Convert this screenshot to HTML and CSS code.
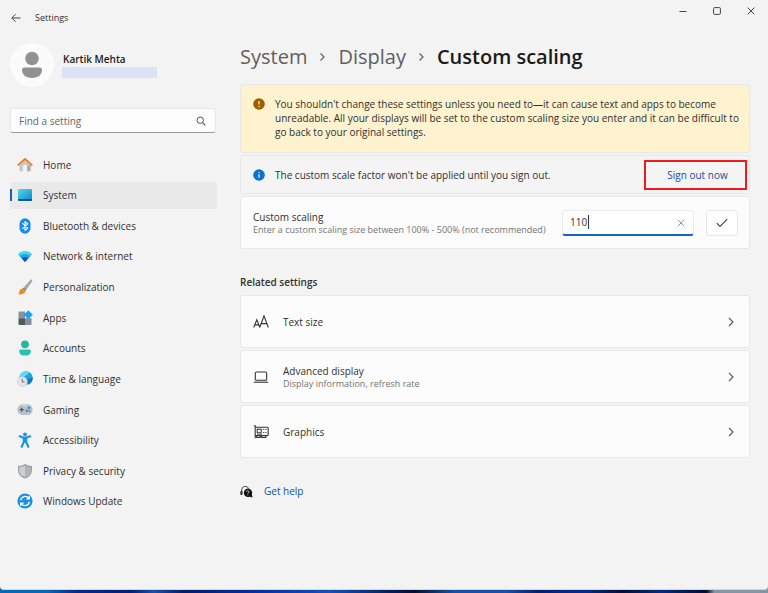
FILE: index.html
```html
<!DOCTYPE html>
<html lang="en">
<head>
<meta charset="utf-8">
<meta name="viewport" content="width=device-width, initial-scale=1">
<title>Settings</title>
<link rel="stylesheet" href="styles.css">
</head>
<body>
<div class="window">
  <header class="titlebar">
    <button class="icon-button back" type="button" aria-label="Back"><svg width="10" height="10" viewBox="0 0 10 10"><path d="M9.500 5H.8M4.600 1.200.8 5l3.800 3.800" fill="none" stroke="#444"/></svg></button>
    <span class="app-name">Settings</span>
    <div class="window-controls">
      <button class="icon-button" type="button" aria-label="Minimize"><svg width="8" height="8" viewBox="0 0 8 8"><path d="M.5 4.500h7" stroke="#444"/></svg></button>
      <button class="icon-button" type="button" aria-label="Maximize"><svg width="8" height="8" viewBox="0 0 8 8"><rect x=".6" y=".6" width="6.800" height="6.800" rx="1" fill="none" stroke="#444"/></svg></button>
      <button class="icon-button" type="button" aria-label="Close"><svg width="8" height="8" viewBox="0 0 8 8"><path d="m.6.6 6.800 6.800m0-6.800L.6 7.400" fill="none" stroke="#444"/></svg></button>
    </div>
  </header>

  <div class="layout">
    <aside class="sidebar">
      <div class="account">
        <svg class="avatar" width="44" height="44" viewBox="0 0 44 44" aria-hidden="true"><circle cx="22" cy="22" r="22" fill="#fbfbfb"/><circle cx="22" cy="15.500" r="6.800" fill="#919191"/><path d="M14.500 24.500h15c1.700 0 2.500 1 2.500 2.500 0 5-4.500 8-10 8s-10-3-10-8c0-1.500.8-2.500 2.500-2.500z" fill="#919191"/></svg>
        <div class="account-text">
          <strong>Kartik Mehta</strong>
          <div class="account-mail"></div>
        </div>
      </div>

      <label class="search">
        <input type="search" placeholder="Find a setting" aria-label="Find a setting">
        <svg width="10" height="10" viewBox="0 0 10 10" aria-hidden="true"><circle cx="4.200" cy="4.200" r="3.200" fill="none" stroke="#555"/><path d="m6.600 6.600 2.700 2.700" stroke="#555" stroke-width="1.200"/></svg>
      </label>

      <nav class="nav">
        <a href="#home"><svg viewBox="0 0 16 16"><path d="M2.500 7 8 2.200 13.500 7v6.500a.8.8 0 0 1-.8.8H10V9.800a2 2 0 0 0-4 0v4.500H3.300a.8.8 0 0 1-.8-.8z" fill="#c9c9c9"/><path d="M10 9.800v4.500h2.700a.8.8 0 0 0 .8-.8V7z" fill="#adadad"/><path d="M1.300 7.900 8 1.900l6.700 6" fill="none" stroke="#ee7a1a" stroke-width="1.800" stroke-linecap="round" stroke-linejoin="round"/></svg>Home</a>
        <a href="#system" class="current" aria-current="page"><svg viewBox="0 0 16 16"><defs><linearGradient id="screen" x2="1" y2="1"><stop stop-color="#4fdbe9"/><stop offset="1" stop-color="#1480cf"/></linearGradient></defs><rect x="1" y="2" width="14" height="12" rx="1.200" fill="url(#screen)"/><path d="M1 12h14v.8a1.200 1.200 0 0 1-1.200 1.200H2.200A1.200 1.200 0 0 1 1 12.800z" fill="#0b5c94"/></svg>System</a>
        <a href="#bluetooth"><svg viewBox="0 0 16 16"><rect x="2.500" y=".3" width="11" height="15.400" rx="5.500" fill="#168cf2"/><path d="m5.300 5.200 5.400 5L8 12.400V3.600l2.700 2.200-5.400 5" fill="none" stroke="#fff" stroke-width="1.100" stroke-linejoin="round"/></svg>Bluetooth &amp; devices</a>
        <a href="#network"><svg viewBox="0 0 16 16"><path d="M.8 6.200C4.800 1.900 11.200 1.900 15.200 6.200L8 14z" fill="#47d4ed"/><path d="M2.700 8.200c3-3 7.600-3 10.600 0L8 14z" fill="#23a3e2"/><path d="M4.700 10.300c2-1.700 4.600-1.700 6.600 0L8 14z" fill="#1559b0"/></svg>Network &amp; internet</a>
        <a href="#personalization"><svg viewBox="0 0 16 16"><path d="M14.900.8c.7.6.2 1.600-.2 2.300L9.300 10.700 6.700 8.600 12.700 1.800c.6-.7 1.500-1.600 2.200-1z" fill="#9ba8b2"/><path d="m9.300 10.700-2.600-2.100-1 1.100 2.500 2z" fill="#65727c"/><path d="M5.500 9.600c1.800 0 3.100 1.300 2.800 3-.4 2.200-3.300 3.200-7.500 2.700 1.500-.8 1.300-1.800 1.700-3.300.4-1.400 1.500-2.400 3-2.400z" fill="#f08b24"/></svg>Personalization</a>
        <a href="#apps"><svg viewBox="0 0 16 16"><path d="M2.600 1.500H8v6.700H1.500V2.600c0-.6.500-1.100 1.100-1.100z" fill="#88929b"/><path d="M1.500 8.200H8v6.900H2.600A1.100 1.100 0 0 1 1.500 14z" fill="#505860"/><path d="M8 8.200h6.500V14c0 .6-.5 1.100-1.100 1.100H8z" fill="#858e96"/><path d="m11.300.8 4 4-4 4-4-4z" fill="#20a1ef" stroke="#20a1ef" stroke-linejoin="round"/></svg>Apps</a>
        <a href="#accounts"><svg viewBox="0 0 16 16"><circle cx="8" cy="4.300" r="3.900" fill="#21b9a6"/><path d="M4.200 9.500h7.600c1.600 0 2.300.9 2.100 2.200-.4 2.500-2.700 3.900-5.900 3.900s-5.500-1.400-5.900-3.900c-.2-1.300.5-2.200 2.100-2.200z" fill="#2bc2ad"/></svg>Accounts</a>
        <a href="#time"><svg viewBox="0 0 16 16"><circle cx="9" cy="7" r="6.700" fill="#1fa5dc"/><path d="M4 2.700C6.600.2 10-.2 12 1.500 11 4 8 3.800 7 6.500L3 8C2 6 2.500 4 4 2.700z" fill="#5fdaf0"/><path d="M10.500 8.500c2-1.500 3.200-.5 5-2.500.8 3.500-1.500 6.500-4.500 7.500z" fill="#1277bd"/><circle cx="5.300" cy="10.700" r="4.900" fill="#e3e5e7" stroke="#bec4c8" stroke-width=".5"/><path d="M5.200 7.800v3.100h2.300" fill="none" stroke="#55606a" stroke-width=".9"/></svg>Time &amp; language</a>
        <a href="#gaming"><svg viewBox="0 0 16 16"><rect x=".4" y="2.300" width="15.200" height="10.800" rx="5.300" fill="#b9c0c7"/><path d="M4.700 5.700v4m-2-2h4" stroke="#4c5760" stroke-width="1.300"/><circle cx="12" cy="5.700" r="1.200" fill="#238bdf"/><circle cx="9.900" cy="8.800" r="1.200" fill="#238bdf"/><circle cx="12.600" cy="9" r=".8" fill="#4e5963"/><path d="M6 3.700h3" stroke="#e5e8eb"/></svg>Gaming</a>
        <a href="#accessibility"><svg viewBox="0 0 16 16"><circle cx="8" cy="2.300" r="1.900" fill="#1695e5"/><path d="m2.700 4.300 3.500 1.300h3.600l3.500-1.300M8 5.500v4M6.800 6v4l-2.100 4.700M9.200 6v4l2.100 4.700" fill="none" stroke="#1695e5" stroke-width="2.100" stroke-linecap="round" stroke-linejoin="round"/></svg>Accessibility</a>
        <a href="#privacy"><svg viewBox="0 0 16 16"><path d="M8 .8c2 1.500 4.400 2.200 7 2.300v4.300c0 3.700-2.800 6.500-7 8-4.200-1.500-7-4.300-7-8V3.100C3.600 3 6 2.300 8 .8z" fill="#9ca2a8"/><path d="M8 2.200c1.800 1.200 3.700 1.800 5.800 2v3.200C13.800 10.500 11.600 12.800 8 14z" fill="#b0b5ba"/><path d="M8 2.200c-1.800 1.200-3.700 1.800-5.800 2v3.200C2.200 10.500 4.400 12.800 8 14z" fill="#cacdd1"/></svg>Privacy &amp; security</a>
        <a href="#update"><svg viewBox="0 0 16 16"><circle cx="8" cy="8" r="7.600" fill="#1b91e1"/><path d="M3.700 7.200a4.500 4.500 0 0 1 8.200-1.700m.4 3.300a4.500 4.500 0 0 1-8.200 1.700M12.300 2.900v2.900H9.400M3.700 13.100v-2.900h2.900" fill="none" stroke="#fff" stroke-width="1.300"/></svg>Windows Update</a>
      </nav>
    </aside>

    <main class="content">
      <div class="breadcrumb">
        <a href="#system">System</a>
        <svg width="7" height="10" viewBox="0 0 7 10" aria-hidden="true"><path d="m1.500 1.500 3.500 3.500-3.500 3.500" fill="none" stroke="#666" stroke-width="1.300"/></svg>
        <a href="#display">Display</a>
        <svg width="7" height="10" viewBox="0 0 7 10" aria-hidden="true"><path d="m1.500 1.500 3.500 3.500-3.500 3.500" fill="none" stroke="#666" stroke-width="1.300"/></svg>
        <h1>Custom scaling</h1>
      </div>

      <div class="stack">
        <section class="card warning">
          <svg width="12" height="12" viewBox="0 0 12 12" aria-hidden="true"><circle cx="6" cy="6" r="5.800" fill="#9d5d00"/><path d="M6 3v3.500" stroke="#fff4ce" stroke-width="1.200"/><circle cx="6" cy="8.500" r=".7" fill="#fff4ce"/></svg>
          <p>You shouldn't change these settings unless you need to—it can cause text and apps to become unreadable. All your displays will be set to the custom scaling size you enter and it can be difficult to go back to your original settings.</p>
        </section>
        <section class="card info">
          <svg width="12" height="12" viewBox="0 0 12 12" aria-hidden="true"><circle cx="6" cy="6" r="5.800" fill="#0874d1"/><path d="M6 5.300v3.500" stroke="#fff" stroke-width="1.200"/><circle cx="6" cy="3.600" r=".7" fill="#fff"/></svg>
          <p>The custom scale factor won't be applied until you sign out.</p>
          <button class="sign-out" type="button">Sign out now</button>
        </section>
        <section class="card scaling">
          <div class="card-text">
            <label for="scale">Custom scaling</label>
            <small>Enter a custom scaling size between 100% - 500% (not recommended)</small>
          </div>
          <div class="field">
            <input id="scale" type="text" inputmode="numeric" value="110">
            <button class="icon-button clear" type="button" aria-label="Clear"><svg width="8" height="8" viewBox="0 0 8 8"><path d="m.8.8 6.400 6.400m0-6.400L.8 7.200" fill="none" stroke="#888" stroke-width=".9"/></svg></button>
          </div>
          <button class="apply" type="button" aria-label="Apply"><svg width="12" height="10" viewBox="0 0 12 10"><path d="m.8 5.200 3.200 3.200L11.200 1.200" fill="none" stroke="#444" stroke-width="1.100"/></svg></button>
        </section>
      </div>

      <h2>Related settings</h2>
      <div class="stack">
        <a class="card link-card" href="#text-size">
          <svg width="16" height="16" viewBox="0 0 16 16" aria-hidden="true"><path d="m.7 13.500 3.100-7.800 3.100 7.800M1.800 10.900h4M6.700 13.500 11 1.800l4.300 11.700M8.100 9.600h5.800" fill="none" stroke="#333" stroke-width="1.100"/></svg>
          <span class="card-text"><span>Text size</span></span>
          <svg class="chevron" width="6" height="10" viewBox="0 0 6 10" aria-hidden="true"><path d="m1 1 4 4-4 4" fill="none" stroke="#555" stroke-width="1.100"/></svg>
        </a>
        <a class="card link-card" href="#advanced-display">
          <svg width="16" height="16" viewBox="0 0 16 16" aria-hidden="true"><rect x="2.300" y="3" width="11.400" height="8.200" rx="1.300" fill="none" stroke="#333" stroke-width="1.100"/><path d="M.8 13.200h14.400" stroke="#333" stroke-width="1.100"/></svg>
          <span class="card-text"><span>Advanced display</span><small>Display information, refresh rate</small></span>
          <svg class="chevron" width="6" height="10" viewBox="0 0 6 10" aria-hidden="true"><path d="m1 1 4 4-4 4" fill="none" stroke="#555" stroke-width="1.100"/></svg>
        </a>
        <a class="card link-card" href="#graphics">
          <svg width="16" height="16" viewBox="0 0 16 16" aria-hidden="true"><path d="M.8 1.700h1.400v12.600M2.200 3.200h12c.6 0 1 .4 1 1v6.400c0 .6-.4 1-1 1h-12M3.700 11.600v1.900h3.600v-1.900m1.400 0v1.900h4.100v-1.900" fill="none" stroke="#333" stroke-width="1.100"/><rect x="4.200" y="5.200" width="4" height="3.600" fill="none" stroke="#333"/><path d="M10 5.500h1.300m1 0h1.300M10 8.500h1.300m1 0h1.300M4 10.200h5" stroke="#555"/></svg>
          <span class="card-text"><span>Graphics</span></span>
          <svg class="chevron" width="6" height="10" viewBox="0 0 6 10" aria-hidden="true"><path d="m1 1 4 4-4 4" fill="none" stroke="#555" stroke-width="1.100"/></svg>
        </a>
      </div>

      <a class="help" href="#help">
        <svg width="13" height="13" viewBox="0 0 13 13" aria-hidden="true"><path d="M1.700 9.300V4.800a3.600 3.600 0 0 1 6.900-1.300" fill="none" stroke="#444"/><rect x=".3" y="6" width="2.200" height="4" rx=".8" fill="#333"/><path d="M7.800 3.500a4.300 4.300 0 0 1 4 6l.8 3-2.900-.7a4.300 4.300 0 1 1-1.900-8.300z" fill="#111"/><path d="M6.500 6.800c0-1.600 2.600-1.500 2.600 0 0 1-1.300 1-1.300 2" fill="none" stroke="#ddd" stroke-width=".8"/><circle cx="7.800" cy="10.100" r=".5" fill="#ddd"/></svg>
        <span>Get help</span>
      </a>
    </main>
  </div>
</div>
</body>
</html>
```
FILE: styles.css
```css
* {
  box-sizing: border-box;
}

body {
  margin: 0;
  min-height: 100vh;
  padding-bottom: 3px;
  display: flex;
  flex-direction: column;
  background: linear-gradient(90deg, #0868b8 0, #0868b8 6%, #042a86 10%, #031e78 17%, #1552a8 20%, #031a6a 24%, #03309a 33%, #1253b4 43%, #021d5c 51%, #02102e 54%, #1450a4 59%, #1450a4 66%, #03206f 70%, #032c8c 76%, #020e38 81%, #032a80 86%, #020c34 92%, #8296a6 93%);
  color: #303030;
  font: 10px/14px "Open Sans", "Noto Sans", sans-serif;
}

button,
input {
  font: inherit;
  color: inherit;
}

a {
  color: inherit;
  text-decoration: none;
}

p,
h1,
h2 {
  margin: 0;
}

svg {
  flex: none;
  display: block;
}

.window {
  flex: 1;
  background: #f3f3f3;
  border-bottom: 1px solid #cfd6dc;
  border-radius: 0 0 4px 4px;
}

.icon-button {
  display: flex;
  align-items: center;
  justify-content: center;
  padding: 0;
  border: 0;
  background: none;
}

/* Title bar */
.titlebar {
  display: flex;
  align-items: center;
  height: 36px;
  padding-left: 6px;
}

.back {
  width: 20px;
  height: 20px;
}

.app-name {
  flex: 1;
  margin-left: 9px;
  font-size: 9px;
}

.window-controls {
  display: flex;
  align-self: flex-start;
}

.window-controls .icon-button {
  width: 34px;
  height: 22px;
}

/* Page columns */
.layout {
  display: grid;
  grid-template-columns: 207px minmax(0, 1fr);
  column-gap: 23px;
  padding: 7px 18px 24px 10px;
}

.account {
  display: flex;
  align-items: center;
  gap: 8px;
}

.account-text {
  display: grid;
  gap: 1px;
  color: #1a1a1a;
}

.account-text strong {
  padding-left: 1px;
  font-weight: 600;
}

.account-mail {
  width: 95px;
  height: 11px;
  background: #d9e3f5;
}

.search {
  display: flex;
  align-items: center;
  height: 25px;
  margin: 21px 1px 18px 0;
  padding: 0 9px 0 8px;
  border: 1px solid #e8e8e8;
  border-bottom-color: #9a9a9a;
  border-radius: 3px;
  background: #fdfdfd;
}

.search input {
  flex: 1;
  min-width: 0;
  padding: 0;
  border: 0;
  outline: 0;
  background: none;
}

.search input::placeholder {
  color: #666;
  opacity: 1;
}

.nav {
  display: flex;
  flex-direction: column;
  justify-content: space-between;
  min-height: 364px;
}

.nav a {
  display: flex;
  align-items: center;
  gap: 10px;
  height: 27px;
  padding-left: 7px;
  border-radius: 3px;
}

.nav svg {
  width: 16px;
  height: 16px;
}

.nav .current {
  background: linear-gradient(#0f62bd, #0f62bd) 0 50% / 2px 12px no-repeat #e9e9e9;
}

/* Content */
.breadcrumb {
  display: flex;
  align-items: center;
  gap: 12px;
  margin-bottom: 13px;
  color: #5f5f5f;
  font-size: 20px;
  font-weight: 500;
  line-height: 28px;
}

h1 {
  color: #1a1a1a;
  font-size: 20px;
  font-weight: 600;
}

h2 {
  margin: 26px 0 6px;
  font-size: 10px;
  font-weight: 600;
}

.stack {
  display: grid;
  gap: 2px;
}

.card {
  display: flex;
  align-items: center;
  min-height: 53px;
  padding: 0 12px;
  border: 1px solid #e8e8e8;
  border-radius: 3px;
  background: #fcfcfc;
}

.card-text {
  flex: 1;
  display: grid;
}

small {
  color: #747474;
  font-size: 9px;
  line-height: 12px;
}

.warning {
  align-items: flex-start;
  gap: 10px;
  padding: 12px 4px 13px 12px;
  background: #fff2ce;
}

.warning svg {
  margin-top: 1px;
}

.info {
  gap: 10px;
  min-height: 39px;
  padding-right: 2px;
  background: #f4f4f4;
}

.info p {
  flex: 1;
}

.sign-out {
  width: 103px;
  height: 30px;
  padding: 0 0 0 4px;
  border: 2px solid #f11919;
  background: none;
  color: #134fa5;
}

.scaling {
  gap: 12px;
  padding-right: 11px;
}

.field {
  position: relative;
  width: 132px;
}

/* The second layer draws the text cursor after the value. */
.field input {
  width: 100%;
  height: 26px;
  display: block;
  padding: 0 24px 0 7px;
  border: 1px solid #ececec;
  border-bottom: 2px solid #1467bd;
  border-radius: 3px;
  outline: 0;
  background: linear-gradient(#333, #333) 25px 50% / 1px 14px no-repeat #fff;
}

.clear {
  position: absolute;
  top: 3px;
  right: 3px;
  width: 20px;
  height: 20px;
}

.apply {
  display: flex;
  align-items: center;
  justify-content: center;
  width: 32px;
  height: 26px;
  padding: 0;
  border: 1px solid #e8e8e8;
  border-radius: 3px;
  background: #fefefe;
}

.link-card {
  gap: 14px;
  padding-right: 15px;
}

.help {
  display: inline-flex;
  align-items: center;
  gap: 11px;
  margin-top: 26px;
  color: #134fa5;
}
```
